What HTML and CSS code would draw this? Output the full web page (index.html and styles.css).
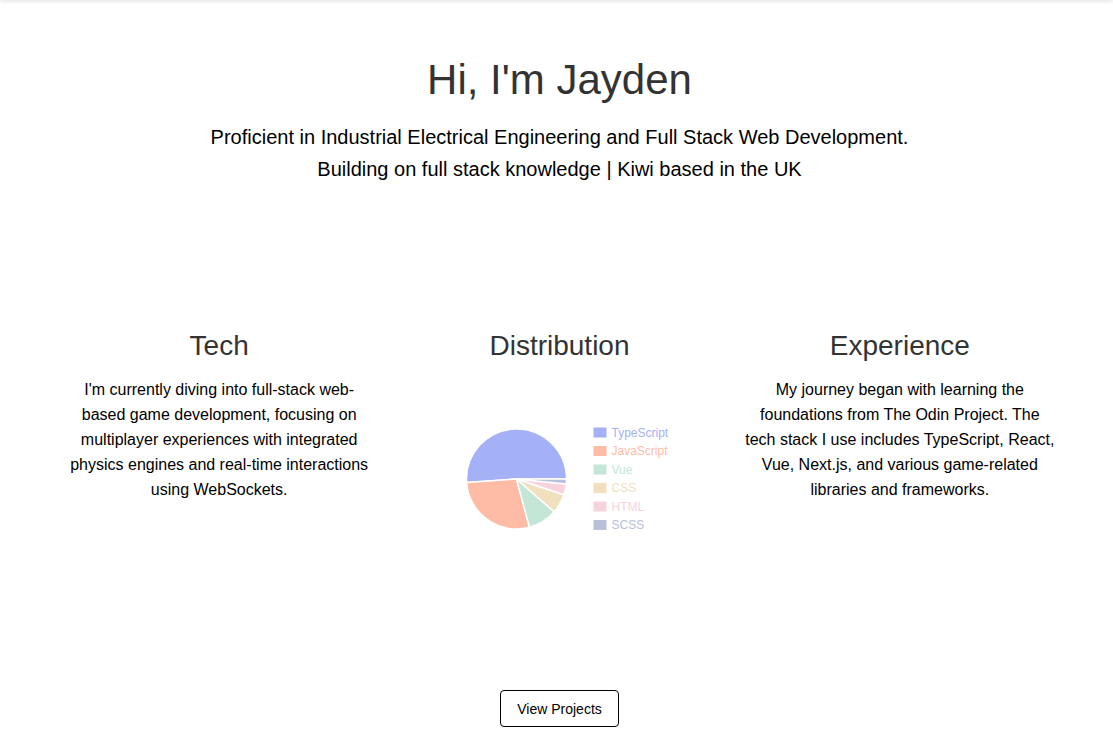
FILE: index.html
```html
<!DOCTYPE html>
<html lang="en">
<head>
<meta charset="utf-8">
<title>Jayden</title>
<link rel="stylesheet" href="styles.css">
</head>
<body>
<header class="topbar"></header>
<main class="page">
  <section class="hero">
    <h1 class="hero-title">Hi, I'm Jayden</h1>
    <p class="hero-sub">Proficient in Industrial Electrical Engineering and Full Stack Web Development.<br>Building on full stack knowledge | Kiwi based in the UK</p>
  </section>
  <section class="columns">
    <div class="col">
      <h2 class="col-title">Tech</h2>
      <p class="col-text">I'm currently diving into full-stack web-based game development, focusing on multiplayer experiences with integrated physics engines and real-time interactions using WebSockets.</p>
    </div>
    <div class="col">
      <h2 class="col-title">Distribution</h2>
      <svg class="chart" width="220" height="156" viewBox="0 0 220 156">
        <g stroke="#fff" stroke-width="1.5" stroke-linejoin="round">
          <path fill="#a4b1f6" d="M67.5 99 L117.5 99 A50 50 0 1 0 17.62 102.49 Z"/>
          <path fill="#febba6" d="M67.5 99 L17.62 102.49 A50 50 0 0 0 80.44 147.3 Z"/>
          <path fill="#c3e6d6" d="M67.5 99 L80.44 147.3 A50 50 0 0 0 105.24 131.8 Z"/>
          <path fill="#f1e0c0" d="M67.5 99 L105.24 131.8 A50 50 0 0 0 114.94 114.78 Z"/>
          <path fill="#f7d3dd" d="M67.5 99 L114.94 114.78 A50 50 0 0 0 117.25 103.97 Z"/>
          <path fill="#b9c0d9" d="M67.5 99 L117.25 103.97 A50 50 0 0 0 117.5 99 Z"/>
        </g>
        <g class="legend">
          <rect x="144.5" y="47.5" width="13" height="10" fill="#a4b1f6"/>
          <text x="162.5" y="52.5" fill="#a4b1f6">TypeScript</text>
          <rect x="144.5" y="66" width="13" height="10" fill="#febba6"/>
          <text x="162.5" y="71" fill="#febba6">JavaScript</text>
          <rect x="144.5" y="84.5" width="13" height="10" fill="#c3e6d6"/>
          <text x="162.5" y="89.5" fill="#c3e6d6">Vue</text>
          <rect x="144.5" y="103" width="13" height="10" fill="#f1e0c0"/>
          <text x="162.5" y="108" fill="#f1e0c0">CSS</text>
          <rect x="144.5" y="121.5" width="13" height="10" fill="#f7d3dd"/>
          <text x="162.5" y="126.5" fill="#f7d3dd">HTML</text>
          <rect x="144.5" y="140" width="13" height="10" fill="#b9c0d9"/>
          <text x="162.5" y="145" fill="#b9c0d9">SCSS</text>
        </g>
      </svg>
    </div>
    <div class="col">
      <h2 class="col-title">Experience</h2>
      <p class="col-text">My journey began with learning the foundations from The Odin Project. The tech stack I use includes TypeScript, React, Vue, Next.js, and various game-related libraries and frameworks.</p>
    </div>
  </section>
  <div class="actions">
    <a class="btn" href="#">View Projects</a>
  </div>
</main>
</body>
</html>
```

FILE: styles.css
```css
html, body {
  margin: 0;
  padding: 0;
  background: #fff;
}

body {
  font-family: "Liberation Sans", Arial, sans-serif;
  color: #000;
}

.topbar {
  height: 4px;
  margin-top: -4px;
  background: #fff;
  box-shadow: 0 1px 4px rgba(0, 0, 0, 0.14);
}

.page {
  padding-left: 6px;
}

.hero {
  padding-top: 56px;
  text-align: center;
}

.hero-title {
  margin: 0;
  font-size: 42px;
  line-height: 48px;
  font-weight: 400;
  color: #333;
}

.hero-sub {
  margin: 17px 0 0;
  font-size: 20px;
  line-height: 32px;
}

.columns {
  display: grid;
  grid-template-columns: repeat(3, 1fr);
  padding: 0 43px;
  margin-top: 145px;
}

.col {
  padding: 0 15px;
  text-align: center;
  display: flex;
  flex-direction: column;
  align-items: center;
}

.col-title {
  margin: 0;
  font-size: 28px;
  line-height: 32px;
  font-weight: 400;
  color: #333;
}

.col-text {
  margin: 15px 0 0;
  font-size: 16px;
  line-height: 25px;
}

.chart {
  display: block;
  margin-top: 18px;
}

.legend text {
  font-family: "Liberation Sans", Arial, sans-serif;
  font-size: 12px;
  dominant-baseline: central;
}

.actions {
  display: flex;
  justify-content: center;
  margin-top: 154px;
}

.btn {
  display: inline-flex;
  align-items: center;
  height: 37px;
  box-sizing: border-box;
  padding: 0 16px;
  border: 1px solid #000;
  border-radius: 4px;
  font-size: 14px;
  color: #000;
  text-decoration: none;
}
```
